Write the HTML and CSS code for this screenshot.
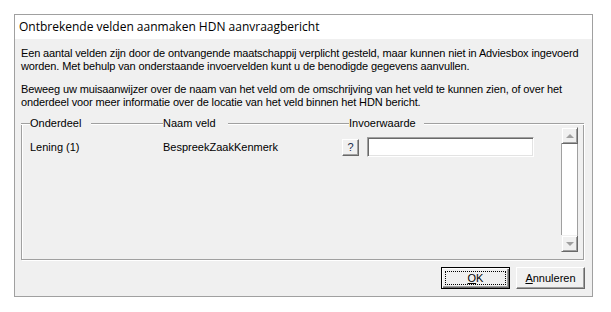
FILE: index.html
```html
<!DOCTYPE html>
<html lang="nl">
<head>
    <meta charset="UTF-8">
    <title>Ontbrekende velden aanmaken HDN aanvraagbericht</title>
    <link rel="stylesheet" href="styles.css">
</head>
<body>

<div class="dialog">
    <div class="title">Ontbrekende velden aanmaken HDN aanvraagbericht</div>

    <div class="content">
        <p class="intro">Een aantal velden zijn door de ontvangende maatschappij verplicht gesteld, maar kunnen niet in Adviesbox ingevoerd<br>worden. Met behulp van onderstaande invoervelden kunt u de benodigde gegevens aanvullen.</p>
        <p class="intro second">Beweeg uw muisaanwijzer over de naam van het veld om de omschrijving van het veld te kunnen zien, of over het<br>onderdeel voor meer informatie over de locatie van het veld binnen het HDN bericht.</p>

        <div class="group-head">
            <div class="head-col">
                <span class="line corner"></span>
                <span class="head-label">Onderdeel</span>
                <span class="line fill gap-1"></span>
            </div>
            <div class="head-col">
                <span class="head-label">Naam veld</span>
                <span class="line fill gap-2"></span>
            </div>
            <div class="head-col">
                <span class="head-label">Invoerwaarde</span>
                <span class="line fill gap-3"></span>
            </div>
        </div>

        <div class="group">
            <div class="group-body">
                <div class="rows">
                    <div class="row">
                        <span class="cell-part">Lening (1)</span>
                        <span class="cell-name">BespreekZaakKenmerk</span>
                        <span class="cell-value">
                            <button class="help-btn">?</button>
                            <input type="text" class="field">
                        </span>
                    </div>
                </div>
                <div class="scrollbar">
                    <div class="scroll-btn"><span class="arrow up"></span></div>
                    <div class="scroll-track"></div>
                    <div class="scroll-btn"><span class="arrow down"></span></div>
                </div>
            </div>
        </div>

        <div class="actions">
            <button class="btn btn-default"><span class="focus"><u>O</u>K</span></button>
            <button class="btn"><span class="plain"><u>A</u>nnuleren</span></button>
        </div>
    </div>
</div>

</body>
</html>
```

FILE: styles.css
```css
body {
    margin: 0;
    padding: 0;
    background-color: #fff;
    font-family: 'Liberation Sans', Arial, sans-serif;
    font-size: 11px;
    color: #000;
}

.dialog {
    margin: 14px 0 0 14px;
    width: 579px;
    height: 283px;
    box-sizing: border-box;
    border: 1px solid #a0a0a0;
    display: flex;
    flex-direction: column;
}

.title {
    height: 24px;
    line-height: 24px;
    padding-left: 4px;
    background-color: #fff;
    font-family: 'Open Sans', 'Noto Sans', sans-serif;
    font-size: 12px;
}

.content {
    flex: 1;
    background-color: #f0f0f0;
    padding: 8px 7px 7px 6px;
}

.intro {
    margin: 0;
    line-height: 13px;
    letter-spacing: -0.13px;
    white-space: nowrap;
}

.intro.second {
    margin-top: 10px;
}

/* column headers drawn on the top edge of the group box */
.group-head {
    margin-top: 7px;
    width: 563px;
    height: 14px;
    line-height: 14px;
    display: grid;
    grid-template-columns: 142px 186px 1fr;
}

.head-col {
    display: flex;
}

.line {
    margin-top: 7px;
    height: 0;
    border-top: 1px solid #a0a0a0;
    border-bottom: 1px solid #fff;
}

.corner {
    width: 9px;
}

.fill {
    flex: 1;
}

.gap-1 { margin-left: 10px; }
.gap-2 { margin-left: 12px; }
.gap-3 { margin-left: 8px; }

.group {
    margin-top: -7px;
    width: 563px;
    box-sizing: border-box;
    border: 1px solid #a0a0a0;
    border-top: none;
    box-shadow: inset 1px 0 0 #fff, 1px 1px 0 #fff;
}

.group-body {
    display: flex;
    padding: 4px 5px 7px 0;
}

.rows {
    flex: 1;
}

.row {
    margin-top: 10px;
    height: 20px;
    display: grid;
    grid-template-columns: 141px 179px 1fr;
    align-items: center;
}

.cell-part {
    padding-left: 8px;
}

.cell-value {
    display: flex;
    align-items: center;
    gap: 8px;
}

.help-btn {
    width: 17px;
    height: 17px;
    padding: 0;
    margin: 0;
    box-sizing: border-box;
    background-color: #f0f0f0;
    border: 1px solid;
    border-color: #fff #696969 #696969 #fff;
    box-shadow: inset -1px -1px 0 #a0a0a0;
    font-family: 'Liberation Sans', Arial, sans-serif;
    font-size: 11px;
    line-height: 14px;
    color: #1a2a4a;
}

.field {
    width: 167px;
    height: 20px;
    margin: 0;
    padding: 0 3px;
    box-sizing: border-box;
    background-color: #fff;
    border: 1px solid;
    border-color: #a0a0a0 #fff #fff #a0a0a0;
    box-shadow: inset 1px 1px 0 #696969, inset -1px -1px 0 #e3e3e3;
    outline: none;
}

.scrollbar {
    width: 17px;
    height: 125px;
    display: flex;
    flex-direction: column;
    background-color: #fff;
}

.scroll-track {
    flex: 1;
    border-left: 1px solid #a0a0a0;
    border-right: 1px solid #a0a0a0;
    background-color: #fff;
}

.scroll-btn {
    height: 17px;
    box-sizing: border-box;
    background-color: #f0f0f0;
    border: 1px solid;
    border-color: #f0f0f0 #696969 #696969 #f0f0f0;
    box-shadow: inset 1px 1px 0 #fff, inset -1px -1px 0 #a0a0a0;
    display: flex;
    align-items: center;
    justify-content: center;
}

.arrow {
    width: 0;
    height: 0;
    border-left: 4px solid transparent;
    border-right: 4px solid transparent;
}

.arrow.up {
    border-bottom: 4px solid #a0a0a0;
}

.arrow.down {
    border-top: 4px solid #a0a0a0;
}

.actions {
    margin-top: 7px;
    display: flex;
    justify-content: flex-end;
    gap: 6px;
}

.btn {
    width: 69px;
    height: 22px;
    margin: 0;
    padding: 0;
    box-sizing: border-box;
    display: flex;
    background-color: #f0f0f0;
    border: 1px solid;
    border-color: #fff #696969 #696969 #fff;
    box-shadow: inset -1px -1px 0 #a0a0a0;
    font-family: 'Liberation Sans', Arial, sans-serif;
    font-size: 11px;
    color: #000;
}

.btn-default {
    border-color: #000;
    box-shadow: inset 1px 1px 0 #fff, inset -1px -1px 0 #696969, inset -2px -2px 0 #a0a0a0;
    padding: 3px;
}

.focus,
.plain {
    flex: 1;
    display: flex;
    align-items: center;
    justify-content: center;
}

.focus {
    border: 1px dotted #000;
}
```
